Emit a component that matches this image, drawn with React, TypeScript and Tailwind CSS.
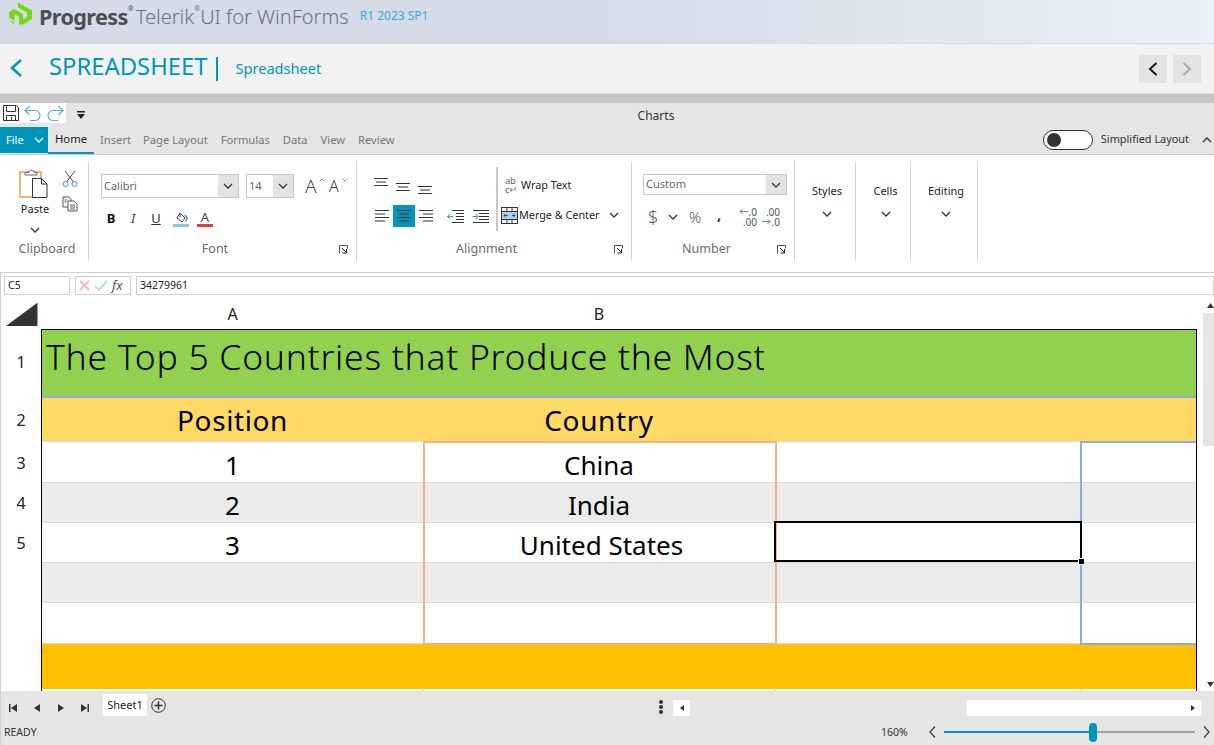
import React from "react";

const ui = "font-['Open_Sans','Noto_Sans',sans-serif]";

function Chev({ className = "", d = "M1 1l4 4 4-4" }: { className?: string; d?: string }) {
  return (
    <svg width="10" height="6" viewBox="0 0 10 6" className={className} fill="none" stroke="#333" strokeWidth="1.3">
      <path d={d} />
    </svg>
  );
}

function Lines({ rows, active }: { rows: [number, number][]; active?: boolean }) {
  return (
    <div className={`w-[22px] h-[22px] flex items-center justify-center ${active ? "bg-[#0096bb]" : ""}`}>
      <svg width="16" height="14" viewBox="0 0 16 14" stroke="#333" strokeWidth="1">
        {rows.map((r, i) => (
          <path key={i} d={`M${r[0]} ${1.5 + i * 3.5}H${r[1]}`} />
        ))}
      </svg>
    </div>
  );
}

function VAlign({ className }: { className: string }) {
  return (
    <svg width="14" height="9" viewBox="0 0 14 9" stroke="#333" strokeWidth="1" className={className}>
      <path d="M0 .5h14M2 4h10M0 7.500h14" />
    </svg>
  );
}

function Logo() {
  return (
    <svg width="24" height="24" viewBox="0 0 24 24" fill="#76d815" className="-mt-[6px]">
      <path d="M9 0.500L23 8.500V17L13 23V18L18 15V10.500L9 5.500z" />
      <path d="M0 10L5 7L14 12V21L10 23.500V14.500L5.500 12V19L0 15.500z" />
      <path d="M1 18L5 20.500V23z" />
    </svg>
  );
}

function Launcher() {
  return (
    <svg width="9" height="9" viewBox="0 0 9 9" fill="none" stroke="#555">
      <path d="M.5 8.500v-8h8v3" />
      <path d="M3 3l4 4" stroke="#222" />
      <path d="M7.500 4v4h-4" stroke="#222" />
    </svg>
  );
}

function Group({ width, label, labelPad, launcher, children }: { width: string; label: string; labelPad: string; launcher?: boolean; children: React.ReactNode }) {
  return (
    <div className={`${width} h-[100px] border-r border-[#d4d4d4] flex flex-col relative`}>
      <div className="flex-1 min-h-0">{children}</div>
      <div className={`h-[24px] pt-[1px] flex items-center justify-center text-[12.5px] text-[#6b6b6b] ${labelPad}`}>{label}</div>
      {launcher && (
        <div className="absolute right-[8px] bottom-[7px] flex">
          <Launcher />
        </div>
      )}
    </div>
  );
}

function Combo({ text, w, h = "h-[24px]", className = "" }: { text: string; w: string; h?: string; className?: string }) {
  return (
    <div className={`${w} ${h} ${className} border border-[#c8c8c8] flex bg-white`}>
      <div className="flex-1 pl-[2px] text-[11px] text-[#666] flex items-center">{text}</div>
      <div className="w-[20px] bg-[#e3e3e3] flex items-center justify-center">
        <Chev />
      </div>
    </div>
  );
}

function MenuGroup({ width, label, pad = "pl-[4px]" }: { width: string; label: string; pad?: string }) {
  return (
    <div className={`${width} h-[100px] border-r border-[#d4d4d4] flex flex-col items-center pt-[22px] gap-[13px] ${pad}`}>
      <div className="text-[11px] leading-[15px] text-[#222]">{label}</div>
      <Chev />
    </div>
  );
}

function Row({ h, head, headPad = "", bg, pad = "", children, line = "border-b border-b-[#d9d9d9]" }: { h: string; head?: string; headPad?: string; bg: string; pad?: string; children?: React.ReactNode; line?: string }) {
  return (
    <div className={`flex shrink-0 ${h}`}>
      <div className={`w-[40px] shrink-0 flex items-center justify-center text-[16px] text-[#222] bg-white ${headPad}`}>{head}</div>
      <div className={`w-[1155px] shrink-0 ${bg} ${line} border-l border-l-black flex text-[26px] text-black overflow-hidden ${pad}`}>{children}</div>
    </div>
  );
}

function Cells({ a, b, className = "" }: { a?: React.ReactNode; b?: React.ReactNode; className?: string }) {
  return (
    <>
      <div className={`w-[381px] shrink-0 flex items-center justify-center ${className}`}>{a}</div>
      <div className={`w-[352px] shrink-0 flex items-center justify-center ${className}`}>{b}</div>
    </>
  );
}

function TriBtn({ d }: { d: string }) {
  return (
    <svg width="10" height="10" viewBox="0 0 10 10" fill="#333">
      <path d={d} />
    </svg>
  );
}

export default function App() {
  return (
    <div className={`w-[1214px] h-[745px] overflow-hidden relative bg-white ${ui}`}>
      {/* Product header */}
      <div className="h-[44px] border-b border-[#d5dce4] bg-gradient-to-r from-[#d5dbe7] via-[#d5dbe7] via-50% to-[#e9f0f7] flex items-center pl-[9px] pb-[10px]">
        <Logo />
        <span className="ml-[6px] text-[21.6px] font-bold tracking-[-0.6px] text-[#4b4e52] leading-none">Progress</span>
        <span className="text-[7px] self-start mt-[4px] text-[#4b4e52] w-[8px]">®</span>
        <span className="text-[20px] font-light text-[#68737d] leading-none">Telerik</span>
        <span className="text-[7px] self-start mt-[4px] text-[#68737d] w-[6px]">®</span>
        <span className="text-[20px] font-light text-[#68737d] leading-none">UI for WinForms</span>
        <span className="ml-[11px] mb-[1px] text-[12px] text-[#35a8d0] leading-none">R1 2023 SP1</span>
      </div>

      {/* Example title */}
      <div className="h-[49px] bg-[#f2f2f2] flex items-center">
        <svg width="14" height="20" viewBox="0 0 14 20" className="ml-[9px] -mt-[1px]" fill="none" stroke="#0096bb" strokeWidth="2.6">
          <path d="M12 2L3 10l9 8" />
        </svg>
        <span className="ml-[26px] -mt-[3px] text-[23.800px] text-[#0096bb] leading-none">SPREADSHEET</span>
        <span className="ml-[9px] w-[2px] h-[24px] bg-[#0096bb]" />
        <span className="ml-[17px] text-[14.6px] text-[#0096bb] leading-none">Spreadsheet</span>
        <div className="ml-auto mr-[13px] flex gap-[6px]">
          <div className="w-[28px] h-[28px] bg-[#e3e3e3] flex items-center justify-center">
            <svg width="12" height="16" viewBox="0 0 12 16" fill="none" stroke="#111" strokeWidth="2"><path d="M9.500 2L3 8l6.500 6" /></svg>
          </div>
          <div className="w-[28px] h-[28px] bg-[#e3e3e3] flex items-center justify-center">
            <svg width="12" height="16" viewBox="0 0 12 16" fill="none" stroke="#aaa" strokeWidth="2"><path d="M2.500 2L9 8l-6.500 6" /></svg>
          </div>
        </div>
      </div>
      <div className="h-[10px] bg-[#c6c6c6] border-t border-[#dcdcdc]" />

      {/* QAT */}
      <div className="h-[24px] bg-[#e5e5e5] flex items-start relative">
        <div className="h-[20px] w-[66px] bg-white flex items-center">
          <svg width="18" height="18" viewBox="0 0 18 18" className="ml-[2px] shrink-0" fill="none" stroke="#333">
            <path d="M1.500 1.500h13l2 2v13h-15z" />
            <path d="M4.500 1.500v6h9v-6M4.500 16.500v-5h9v5M9.500 13v3" />
          </svg>
          <svg width="18" height="16" viewBox="0 0 18 16" className="ml-[4px] shrink-0" fill="none" stroke="#58a6dc" strokeWidth="1.100">
            <path d="M5.500 1L1 5.500 5.500 10" />
            <path d="M1 5.500h10a5 5 0 010 10H6" />
          </svg>
          <svg width="18" height="16" viewBox="0 0 18 16" className="ml-[4px] shrink-0" fill="none" stroke="#58a6dc" strokeWidth="1.100">
            <path d="M12.500 1L17 5.500 12.500 10" />
            <path d="M17 5.500H7a5 5 0 000 10h5" />
          </svg>
        </div>
        <svg width="10" height="10" viewBox="0 0 10 10" className="ml-[10px] mt-[8px]" fill="#222">
          <path d="M1 0h8v1.400H1zM1 3h8L5 8z" />
        </svg>
        <div className="absolute left-0 right-0 top-[5px] text-center text-[12px] text-[#333] pl-[98px] leading-[16px]">Charts</div>
      </div>

      {/* Tabs */}
      <div className="h-[28px] bg-[#e5e5e5] border-b border-[#cfcfcf] flex items-stretch">
        <div className="w-[48px] h-[26px] bg-[#0096bb] text-white text-[11px] flex items-center pl-[6px] gap-[10px]">
          File
          <svg width="10" height="6" viewBox="0 0 10 6" fill="none" stroke="#fff" strokeWidth="1.400"><path d="M1 1l4 4 4-4" /></svg>
        </div>
        <div className="w-[46px] h-[27px] border-b-2 border-[#0096bb] text-[11.300px] text-[#222] flex items-center justify-center">Home</div>
        <div className="flex items-center pb-[1px] text-[11.200px] text-[#767676]">
          <span className="ml-[6px] w-[29px]">Insert</span>
          <span className="ml-[14px]">Page Layout</span>
          <span className="ml-[13px]">Formulas</span>
          <span className="ml-[13px]">Data</span>
          <span className="ml-[13px]">View</span>
          <span className="ml-[13px]">Review</span>
        </div>
        <div className="ml-auto flex items-center pb-[2px]">
          <div className="w-[50px] h-[20px] rounded-full border border-[#333] bg-white flex items-center pl-[3px]">
            <div className="w-[14px] h-[14px] rounded-full bg-[#333]" />
          </div>
          <span className="ml-[8px] text-[10.900px] text-[#333]">Simplified Layout</span>
          <svg width="10" height="6" viewBox="0 0 10 6" className="ml-[13px] mr-[2px]" fill="none" stroke="#333" strokeWidth="1.300"><path d="M1 5l4-4 4 4" /></svg>
        </div>
      </div>

      {/* Ribbon */}
      <div className="h-[118px] border-b border-[#cfcfcf] pt-[6px] flex items-start bg-white">
        <Group width="w-[89px]" label="Clipboard" labelPad="pl-[6px]">
          <div className="flex pl-[19px] pt-[8px]">
            <div className="flex flex-col items-center w-[32px]">
              <svg width="32" height="32" viewBox="0 0 32 32" fill="none">
                <rect x="1" y="3" width="21" height="25" fill="#fff" stroke="#f0a04b" strokeWidth="1.600" />
                <path d="M6 6V3.500h4a2.500 2.500 0 015 0h3V6z" fill="#fff" stroke="#666" />
                <path d="M13.500 9.500h9l5.500 5.500v13.500H13.500z" fill="#fff" stroke="#333" />
                <path d="M22.500 9.500V15H28" stroke="#333" />
              </svg>
              <span className="text-[11px] leading-[15px] text-[#222]">Paste</span>
              <Chev className="mt-[11px]" />
            </div>
            <div className="ml-[11px] flex flex-col gap-[9px] mt-[1px]">
              <svg width="16" height="17" viewBox="0 0 16 17" fill="none">
                <path d="M3 1l8.500 11M13 1L4.500 12" stroke="#444" />
                <circle cx="3.500" cy="14" r="2.500" stroke="#3d93d3" />
                <circle cx="12.500" cy="14" r="2.500" stroke="#3d93d3" />
              </svg>
              <svg width="16" height="16" viewBox="0 0 16 16" fill="#fff" stroke="#444" strokeWidth=".9">
                <path d="M1 1h6l2 2v8H1z" />
                <path d="M6 5h6l3 3v7H6z" />
                <path d="M8 9h5M8 11h5M8 13h5M2.500 4h3M2.500 6h2" />
              </svg>
            </div>
          </div>
        </Group>

        <Group width="w-[268px]" label="Font" labelPad="pr-[15px]" launcher>
          <div className="pl-[12px] pt-[13px]">
            <div className="flex items-center">
              <Combo text="Calibri" w="w-[138px]" />
              <Combo text="14" w="w-[48px]" className="ml-[7px]" />
              <span className="relative w-[16px] ml-[11px] text-[19px] leading-[20px] font-light text-[#444]">A
                <svg width="6" height="4" viewBox="0 0 6 4" className="absolute -right-[4px] top-[2px]" fill="none" stroke="#58a6dc"><path d="M.5 3.500L3 1l2.500 2.500" /></svg>
              </span>
              <span className="relative w-[14px] ml-[8px] text-[16px] leading-[20px] font-light text-[#444]">A
                <svg width="6" height="4" viewBox="0 0 6 4" className="absolute -right-[5px] top-[2px]" fill="none" stroke="#58a6dc"><path d="M.5.500L3 3l2.500-2.500" /></svg>
              </span>
            </div>
            <div className="flex items-center mt-[9px] h-[24px] text-[13px]">
              <span className="w-[20px] text-center font-bold text-[#111]">B</span>
              <span className="w-[20px] ml-[2px] text-center italic text-[#333]">I</span>
              <span className="w-[20px] ml-[3px] text-center underline text-[#333]">U</span>
              <div className="w-[16px] ml-[7px] flex flex-col items-center">
                <svg width="14" height="12" viewBox="0 0 14 12" fill="none" stroke="#444"><path d="M6 1l5 5-3 4-5-4z" fill="#fff" /><path d="M11 3l2 3-1 3" stroke="#3d93d3" strokeWidth="1.600" /><path d="M6 1v4" /></svg>
                <div className="w-[16px] h-[3px] bg-[#8fc5e8]" />
              </div>
              <div className="w-[16px] ml-[8px] flex flex-col items-center leading-[13px] text-[13px] text-[#444]">
                A
                <div className="w-[16px] h-[3px] bg-[#e83a3a]" />
              </div>
            </div>
          </div>
        </Group>

        <Group width="w-[275px]" label="Alignment" labelPad="pr-[15px]" launcher>
          <div className="flex pt-[6px] pl-[17px]">
            <div className="w-[122px]">
              <div className="flex h-[38px] items-start">
                <VAlign className="mt-[11px]" />
                <VAlign className="ml-[8px] mt-[16px]" />
                <VAlign className="ml-[8px] mt-[19px]" />
              </div>
              <div className="flex items-center -ml-[3px] h-[22px]">
                <Lines rows={[[1, 15], [1, 11], [1, 15], [1, 11]]} />
                <Lines active rows={[[1, 15], [3, 13], [1, 15], [3, 13]]} />
                <Lines rows={[[1, 15], [5, 15], [1, 15], [5, 15]]} />
                <div className="ml-[10px] flex gap-[7px]">
                  <svg width="18" height="14" viewBox="0 0 18 14" fill="none"><path d="M5 1.500h12M9 4.500h8M9 7.500h8M9 10.500h8M5 13.500h12" stroke="#333" /><path d="M6 7.500H0.500M3 5L.5 7.500 3 10" stroke="#3d93d3" /></svg>
                  <svg width="18" height="14" viewBox="0 0 18 14" fill="none"><path d="M1 1.500h16M7 4.500h10M7 7.500h10M7 10.500h10M1 13.500h16" stroke="#333" /><path d="M.5 7.500h5.500M3.500 5L6 7.500 3.500 10" stroke="#3d93d3" /></svg>
                </div>
              </div>
            </div>
            <div className="w-[2px] h-[64px] bg-[#c8c8c8]" />
            <div className="ml-[2px] w-[124px] pt-[4px]">
              <div className="flex items-center h-[28px] pl-[5px]">
                <span className="w-[12px] text-[9.500px] leading-[9px] text-[#666] tracking-tight">ab<br />c<span className="text-[#3d93d3]">↵</span></span>
                <span className="ml-[4px] text-[10.800px] text-[#222]">Wrap Text</span>
              </div>
              <div className="flex items-center h-[30px] mt-[1px] pl-[1px]">
                <svg width="17" height="17" viewBox="0 0 17 17" fill="none" stroke="#333" className="shrink-0">
                  <rect x=".5" y=".5" width="16" height="16" />
                  <rect x="1" y="5" width="15" height="7" fill="#a9d3ee" stroke="none" />
                  <path d="M.5 4.500h16M.5 12.500h16M6 .5v4M11 .5v4M6 12.500v4M11 12.500v4" />
                  <path d="M3 8.500h4M11 8.500h3M4.500 7L3 8.500 4.500 10M12.500 7L14 8.500 12.500 10" strokeWidth=".8" />
                </svg>
                <span className="ml-[1px] text-[10.800px] text-[#222] whitespace-nowrap">Merge &amp; Center</span>
                <Chev className="ml-[9px] shrink-0" />
              </div>
            </div>
          </div>
        </Group>

        <Group width="w-[163px]" label="Number" labelPad="pr-[13px]" launcher>
          <div className="pl-[11px] pt-[13px]">
            <Combo text="Custom" w="w-[144px]" h="h-[21px]" />
            <div className="flex items-center h-[28px] mt-[8px] text-[#555]">
              <span className="text-[18px] font-light w-[12px] ml-[5px] leading-none">$</span>
              <Chev className="ml-[8px]" />
              <span className="text-[15px] font-light ml-[11px] w-[14px] leading-none">%</span>
              <span className="text-[15px] ml-[14px] w-[6px] font-bold leading-none text-[#333] -mt-[6px]">,</span>
              <div className="relative ml-[16px] w-[18px] h-[20px] text-[10px] leading-[10px] text-[#555] text-right">
                <svg width="9" height="7" viewBox="0 0 9 7" className="absolute left-0 top-[1px]" fill="none" stroke="#3d93d3"><path d="M9 3.500H1M3.500 1L1 3.500 3.500 6" /></svg>
                .0<br />.00
              </div>
              <div className="relative ml-[5px] w-[18px] h-[20px] text-[10px] leading-[10px] text-[#555] text-right">
                <svg width="9" height="7" viewBox="0 0 9 7" className="absolute left-0 top-[11px]" fill="none" stroke="#3d93d3"><path d="M0 3.500h8M5.500 1L8 3.500 5.500 6" /></svg>
                .00<br />.0
              </div>
            </div>
          </div>
        </Group>
        <MenuGroup width="w-[61px]" label="Styles" />
        <MenuGroup width="w-[55px]" label="Cells" pad="pl-[5px]" />
        <MenuGroup width="w-[67px]" label="Editing" />
      </div>

      {/* Formula bar */}
      <div className="h-[23px] pt-[3px] flex items-start border-l border-[#cfcfcf] pl-[3px] text-[10.500px] text-[#222]">
        <div className="w-[66px] h-[19px] border border-[#cfcfcf] pl-[3px] pt-[1px] flex items-center">C5</div>
        <div className="w-[56px] h-[19px] ml-[5px] border border-[#cfcfcf] flex items-center pl-[3px] gap-[4px]">
          <svg width="11" height="11" viewBox="0 0 11 11" stroke="#f3b6b6" strokeWidth="1.800"><path d="M1 1l9 9M10 1l-9 9" /></svg>
          <svg width="14" height="11" viewBox="0 0 14 11" fill="none" stroke="#a9dce8" strokeWidth="1.800"><path d="M1 6l4 4 8-9" /></svg>
          <span className="text-[13px] italic font-['Liberation_Serif',serif] text-[#555]">fx</span>
        </div>
        <div className="flex-1 h-[19px] ml-[5px] border border-[#cfcfcf] pl-[3px] pt-[1px] flex items-center">34279961</div>
      </div>

      {/* Sheet */}
      <div className="h-[395px] relative overflow-hidden border-l border-[#cfcfcf] flex flex-col">
        <div className="h-[33px] shrink-0 flex text-[16px] text-[#222]">
          <div className="w-[41px] flex items-center justify-center">
            <svg width="33" height="24" viewBox="0 0 33 24" className="mt-[3px]"><path d="M32 1v23H1z" fill="#333" /><path d="M32.500 1v23" stroke="#999" /></svg>
          </div>
          <div className="w-[381px] flex items-center justify-center pt-[2px]">A</div>
          <div className="w-[352px] flex items-center justify-center pt-[2px]">B</div>
        </div>
        <div className="relative flex-1 flex flex-col">
          <Row h="h-[69px]" head="1" headPad="pb-[3px]" bg="bg-[#92d050] border-t border-t-black" line="border-b-2 border-b-[#8eaadb]">
            <div className="pl-[4px] pb-[13px] w-[722px] overflow-hidden whitespace-nowrap flex items-center text-[35.500px] tracking-[0.72px] font-light">The Top 5 Countries that Produce the Most</div>
          </Row>
          <Row h="h-[44px]" head="2" bg="bg-[#ffd966]">
            <Cells a={<span className="text-[28px] tracking-[0.6px]">Position</span>} b={<span className="text-[28px] tracking-[0.6px]">Country</span>} />
          </Row>
          <Row h="h-[41px]" head="3" bg="bg-white" pad="pt-[7px]"><Cells a="1" b="China" /></Row>
          <Row h="h-[40px]" head="4" bg="bg-[#ebebeb]" pad="pt-[6px]"><Cells a="2" b="India" /></Row>
          <Row h="h-[40px]" head="5" bg="bg-white" pad="pt-[6px]"><Cells a="3" b={<span className="ml-[5px]">United States</span>} /></Row>
          <Row h="h-[40px]" bg="bg-[#ebebeb]" />
          <Row h="h-[41px]" bg="bg-white" />
          <Row h="h-[45px]" bg="bg-[#ffc000]" line="" />
          {/* gridline ticks and cell frame, lying over the rows */}
          <div className="absolute left-[422px] bottom-0 w-px h-[2px] bg-[#cfcfcf]" />
          <div className="absolute left-[774px] bottom-0 w-px h-[2px] bg-[#cfcfcf]" />
          <div className="absolute left-[1080px] bottom-0 w-px h-[2px] bg-[#cfcfcf]" />
          <div className="absolute left-[40px] top-0 bottom-0 w-px bg-black" />
          <div className="absolute left-[1195px] top-0 bottom-0 w-px bg-black" />
          <div className="absolute left-[422px] top-[112px] w-[354px] h-[204px] border-2 border-[#f4b183]" />
          <div className="absolute left-[1079px] top-[112px] w-[116px] h-[204px] border-2 border-r-0 border-[#8eaadb]" />
          <div className="absolute left-[773px] top-[192px] w-[308px] h-[41px] border-2 border-black" />
          <div className="absolute left-[1077px] top-[229px] w-[7px] h-[7px] bg-black border border-white" />
        </div>
        {/* vertical scrollbar */}
        <svg width="7" height="5" viewBox="0 0 7 5" className="absolute right-0 top-[7px]" fill="#333"><path d="M3.500 0L7 5H0z" /></svg>
        <div className="absolute right-0 top-[17px] w-[11px] h-[133px] bg-[#e5e5e5]" />
        <svg width="7" height="5" viewBox="0 0 7 5" className="absolute right-0 bottom-[4px]" fill="#333"><path d="M0 0h7L3.500 5z" /></svg>
      </div>

      {/* Bottom */}
      <div className="absolute left-0 right-0 bottom-0 h-[54px] bg-[#e5e5e5] border-l border-[#cfcfcf]">
        <div className="h-[32px] flex items-start relative text-[11px] text-[#222]">
          <div className="flex items-center gap-[14px] pl-[7px] pt-[12px]">
            <TriBtn d="M1 1h1.500v8H1zM9 1v8L3 5z" />
            <TriBtn d="M8 1v8L2 5z" />
            <TriBtn d="M2 1v8l6-4z" />
            <TriBtn d="M1 1v8l6-4zM7.500 1H9v8H7.500z" />
          </div>
          <div className="ml-[13px] mt-[3px] w-[44px] h-[22px] bg-white flex items-center justify-center">Sheet1</div>
          <svg width="15" height="15" viewBox="0 0 15 15" className="ml-[4px] mt-[7px]" fill="none" stroke="#333">
            <circle cx="7.500" cy="7.500" r="6.800" />
            <path d="M7.500 3.500v8M3.500 7.500h8" strokeWidth="1.500" />
          </svg>
          <div className="absolute left-[658px] top-[9px] flex flex-col gap-[1px]">
            <div className="w-[4px] h-[4px] rounded-full bg-[#333]" />
            <div className="w-[4px] h-[4px] rounded-full bg-[#333]" />
            <div className="w-[4px] h-[4px] rounded-full bg-[#333]" />
          </div>
          <div className="absolute left-[672px] top-[9px] w-[17px] h-[16px] bg-white flex items-center justify-center"><TriBtn d="M7 2v6L3 5z" /></div>
          <div className="absolute left-[966px] top-[9px] w-[234px] h-[16px] bg-white flex items-center justify-end pr-[3px]"><TriBtn d="M3 2v6l4-3z" /></div>
        </div>
        <div className="h-[22px] flex items-center pl-[3px] pb-[2px] text-[10.500px] text-[#333] relative">
          READY
          <span className="absolute left-[880px] top-[2px]">160%</span>
          <svg width="9" height="14" viewBox="0 0 9 14" className="absolute left-[927px] top-[2px]" fill="none" stroke="#444" strokeWidth="1.300"><path d="M7 1.500L2 7l5 5.500" /></svg>
          <div className="absolute left-[943px] top-[8px] w-[150px] h-[2px] bg-[#0096bb]" />
          <div className="absolute left-[1093px] top-[8px] w-[101px] h-[2px] bg-[#a0a0a0]" />
          <div className="absolute left-[1088px] top-[0px] w-[8px] h-[19px] rounded-[4px] bg-[#0096bb]" />
          <svg width="9" height="14" viewBox="0 0 9 14" className="absolute left-[1201px] top-[2px]" fill="none" stroke="#444" strokeWidth="1.300"><path d="M2 1.500L7 7l-5 5.500" /></svg>
        </div>
      </div>
    </div>
  );
}
